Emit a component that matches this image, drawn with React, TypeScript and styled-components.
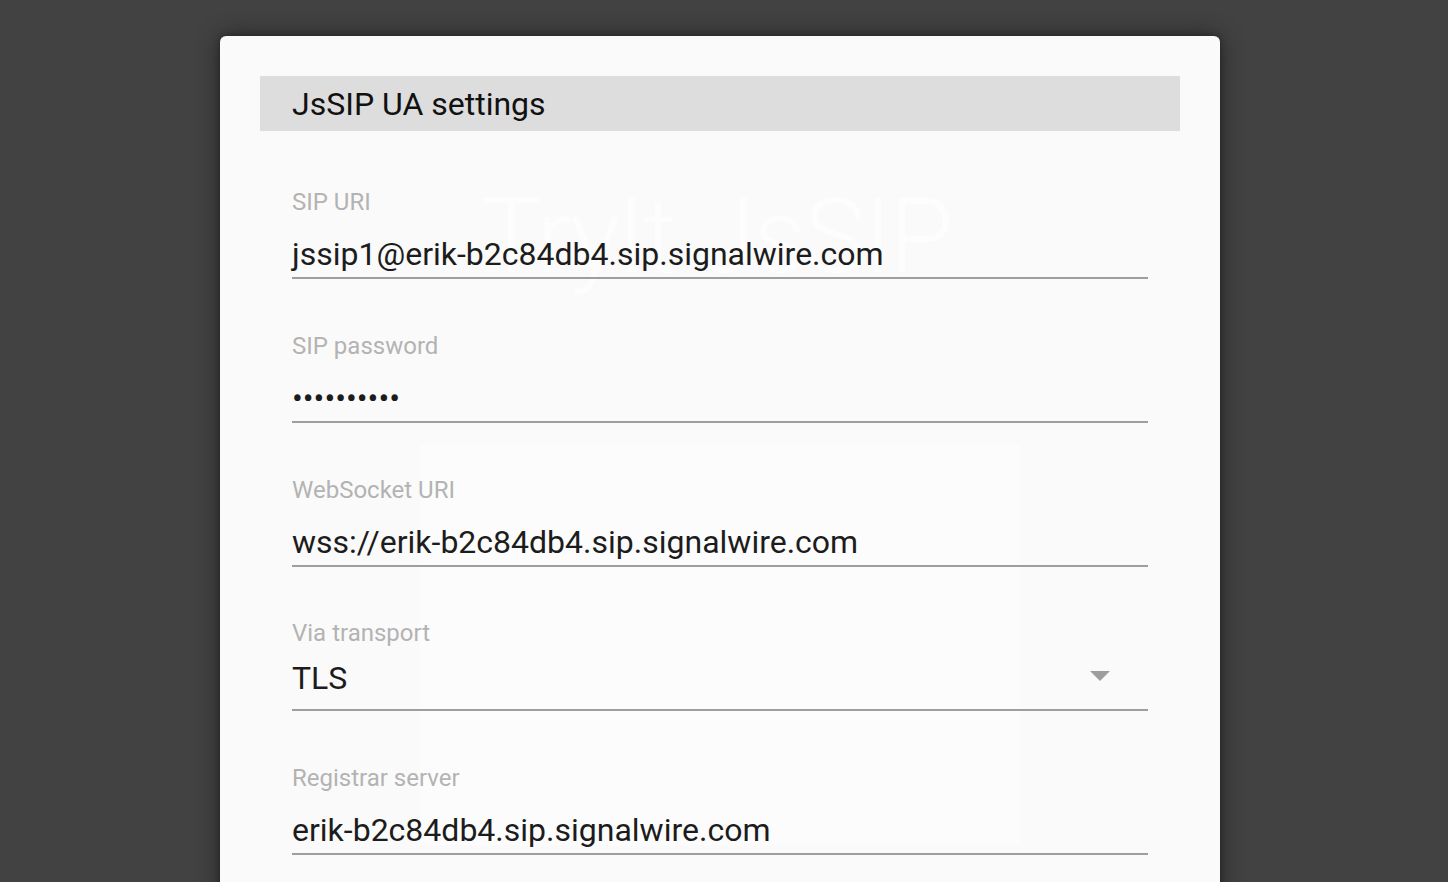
import React from 'react';
import styled, { createGlobalStyle } from 'styled-components';

const GlobalStyle = createGlobalStyle`
  html, body {
    margin: 0;
    padding: 0;
    overflow: hidden;
    background: #424242;
    font-family: Roboto, "Noto Sans", "Liberation Sans", sans-serif;
  }
`;

const Page = styled.div`
  width: 100%;
  height: 100vh;
  display: flex;
  justify-content: center;
  padding: 36px 8px 0 0;
  box-sizing: border-box;
`;

const Dialog = styled.div`
  position: relative;
  width: 1000px;
  height: 900px;
  flex-shrink: 0;
  box-sizing: border-box;
  padding: 40px 40px 0;
  background: #fafafa;
  border-radius: 6px;
  box-shadow: 0 0 24px rgba(0, 0, 0, 0.45), 0 0 6px rgba(0, 0, 0, 0.3);
`;

/* faint trace of the login screen showing through the dialog */
const Ghost = styled.div`
  position: absolute;
  inset: 0;
  pointer-events: none;
  z-index: 0;
`;

const GhostLogo = styled.div`
  position: absolute;
  left: 260px;
  top: 140px;
  font-size: 104px;
  font-weight: 300;
  letter-spacing: -2px;
  color: #fdfdfd;
  white-space: nowrap;
`;

const GhostBox = styled.div`
  position: absolute;
  left: 200px;
  top: 409px;
  width: 600px;
  height: 400px;
  background: #fcfcfc;
`;

const Content = styled.div`
  position: relative;
  z-index: 1;
`;

const Header = styled.div`
  height: 55px;
  display: flex;
  align-items: center;
  padding-left: 32px;
  background: #dddddd;
  font-size: 32px;
  color: #111;
`;

const Fields = styled.div`
  margin-top: 4px;
  padding: 0 32px;
`;

const Field = styled.div`
  position: relative;
  height: 144px;
  display: flex;
  flex-direction: column;
  justify-content: flex-end;
  border-bottom: 2px solid #9e9e9e;
  box-sizing: border-box;
`;

const Label = styled.div<{ $gap: number }>`
  font-size: 24px;
  line-height: 28px;
  color: #b3b3b3;
  margin-bottom: ${(p) => p.$gap}px;
`;

const Value = styled.div<{ $below: number }>`
  font-size: 32px;
  line-height: 36px;
  color: #1c1c1c;
  margin-bottom: ${(p) => p.$below}px;
  white-space: nowrap;
`;

const Arrow = styled.div`
  position: absolute;
  right: 38px;
  bottom: 28px;
  width: 0;
  height: 0;
  border-left: 10px solid transparent;
  border-right: 10px solid transparent;
  border-top: 10px solid #9e9e9e;
`;

const fields = [
  { label: 'SIP URI', value: 'jssip1@erik-b2c84db4.sip.signalwire.com' },
  { label: 'SIP password', value: '••••••••••' },
  { label: 'WebSocket URI', value: 'wss://erik-b2c84db4.sip.signalwire.com' },
  { label: 'Via transport', value: 'TLS', select: true },
  { label: 'Registrar server', value: 'erik-b2c84db4.sip.signalwire.com' },
];

const App: React.FC = () => {
  return (
    <>
      <GlobalStyle />
      <Page>
        <Dialog>
          <Ghost>
            <GhostLogo>TryIt JsSIP</GhostLogo>
            <GhostBox />
          </Ghost>
          <Content>
            <Header>JsSIP UA settings</Header>
            <Fields>
              {fields.map((f) => (
                <Field key={f.label}>
                  <Label $gap={f.select ? 13 : 20}>{f.label}</Label>
                  <Value $below={f.select ? 13 : 5}>{f.value}</Value>
                  {f.select && <Arrow />}
                </Field>
              ))}
            </Fields>
          </Content>
        </Dialog>
      </Page>
    </>
  );
};

export default App;
